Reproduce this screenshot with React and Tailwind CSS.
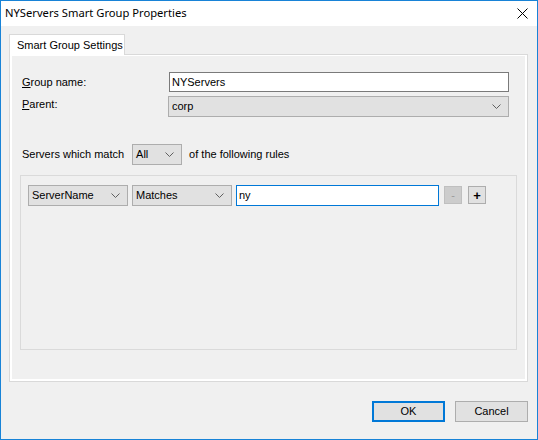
import React from "react";

const Chevron = () => (
  <svg width="9" height="5" viewBox="0 0 9 5" className="shrink-0">
    <path d="M0.5 0.5 L4.5 4.5 L8.5 0.5" fill="none" stroke="#606060" strokeWidth="1" />
  </svg>
);

const Combo = ({ value, className }) => (
  <div
    className={
      "flex items-center justify-between h-[21px] pl-[3px] pr-[7px] bg-[#e1e1e1] border border-[#adadad] " +
      className
    }
  >
    <span>{value}</span>
    <Chevron />
  </div>
);

export default function App() {
  return (
    <div
      className="w-[538px] h-[440px] flex flex-col border border-[#1883d7] bg-[#f0f0f0] text-[11px] text-black"
      style={{ fontFamily: '"Liberation Sans", Arial, sans-serif' }}
    >
      {/* title bar */}
      <div className="h-[25px] bg-white flex items-center justify-between pl-[4px] pr-[9px] shrink-0">
        <span className="text-[11.2px]" style={{ fontFamily: '"Noto Sans", sans-serif' }}>
          NYServers Smart Group Properties
        </span>
        <svg width="11" height="11" viewBox="0 0 11 11">
          <path d="M0.5 0.5 L10.5 10.5 M10.5 0.5 L0.5 10.5" stroke="#000" strokeWidth="1" />
        </svg>
      </div>

      <div className="flex flex-col pl-[8px] pt-[8px]">
        {/* tab */}
        <div className="relative z-10 w-[116px] h-[21px] -mb-[1px] bg-white border border-b-0 border-[#d9d9d9] flex items-center pl-[7px]">
          Smart Group Settings
        </div>

        {/* panel */}
        <div className="w-[519px] h-[328px] border border-[#d9d9d9] bg-white p-[2px] pt-[1px]">
          <div className="h-full bg-[#f0f0f0] px-[8px] pt-[16px] flex flex-col">
            <div className="ml-[2px] mr-[8px] flex items-center h-[20px]">
              <span className="w-[147px]">
                <span className="underline">G</span>roup name:
              </span>
              <div className="flex-1 h-[20px] bg-white border border-[#7a7a7a] flex items-center pl-[2px]">
                NYServers
              </div>
            </div>
            <div className="ml-[2px] mr-[8px] mt-[4px] flex items-center">
              <span className="w-[146px] -mt-[5px]">
                <span className="underline">P</span>arent:
              </span>
              <Combo value="corp" className="flex-1" />
            </div>

            <div className="ml-[2px] mt-[27px] flex items-center">
              <span>Servers which match</span>
              <Combo value="All" className="w-[50px] ml-[8px]" />
              <span className="ml-[7px]">of the following rules</span>
            </div>

            <div className="mt-[10px] h-[175px] border border-[#dadada] pl-[7px] pt-[9px]">
              <div className="flex items-start">
                <Combo value="ServerName" className="w-[100px]" />
                <Combo value="Matches" className="w-[100px] ml-[4px]" />
                <div className="w-[203px] h-[21px] ml-[4px] bg-white border border-[#0078d7] flex items-center pl-[2px]">
                  ny
                </div>
                <div className="w-[18px] h-[18px] ml-[5px] mt-[1px] bg-[#cccccc] border border-[#bfbfbf] flex items-center justify-center text-[#9a9a9a] leading-none">
                  -
                </div>
                <div className="w-[18px] h-[18px] ml-[6px] mt-[1px] bg-[#e1e1e1] border border-[#adadad] flex items-center justify-center font-bold text-[13px] leading-none">
                  +
                </div>
              </div>
            </div>
          </div>
        </div>
      </div>

      {/* buttons */}
      <div className="flex justify-end gap-[10px] pr-[9px] mt-[19px]">
        <div className="w-[73px] h-[21px] bg-[#e1e1e1] border-2 border-[#0078d7] flex items-center justify-center">
          OK
        </div>
        <div className="w-[73px] h-[21px] bg-[#e1e1e1] border border-[#adadad] flex items-center justify-center">
          Cancel
        </div>
      </div>
    </div>
  );
}
